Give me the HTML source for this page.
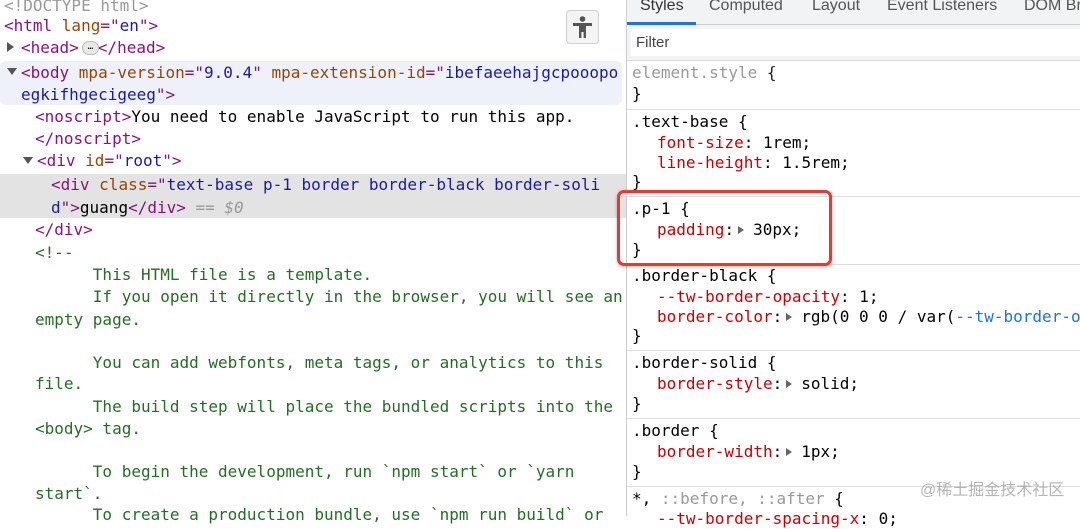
<!DOCTYPE html>
<html><head><style>
body{margin:0;width:1080px;height:516px;overflow:hidden;background:#fff;position:relative;font-family:"DejaVu Sans Mono","Liberation Mono",monospace;font-size:16px;}
.l{position:absolute;white-space:pre;line-height:20px;}
.t{color:#881280}.a{color:#994500}.v{color:#1a1aa6}.c{color:#236e25}.g{color:#999}.p{color:#c80000}.b{color:#1a73e8}
.s{font-family:"Liberation Sans",sans-serif;}
.sep{position:absolute;left:627px;right:0;height:1px;background:#ddd}
.in{margin-left:25px}
.ar{display:inline-block;width:0;height:0;border-left:6px solid #666;border-top:4px solid transparent;border-bottom:4px solid transparent;margin:0 9px 1px 4px;vertical-align:middle}
</style></head><body>
<div style="position:absolute;left:0;top:61px;width:622px;height:44px;background:#eef1fa;border-radius:6px"></div>
<div style="position:absolute;left:0;top:174px;width:626px;height:44px;background:#e3e3e3"></div>
<div style="position:absolute;left:626px;top:0;width:1px;height:516px;background:#ccc"></div>

<div class="l g" style="left:4px;top:-4px">&lt;!DOCTYPE html&gt;</div>
<div class="l" style="left:4px;top:16px"><span class="t">&lt;html </span><span class="a">lang</span><span class="t">="</span><span class="v">en</span><span class="t">"&gt;</span></div>
<div class="l" style="left:7px;top:38px"><span style="position:absolute;left:0;top:4px;width:0;height:0;border-left:7px solid #555;border-top:5px solid transparent;border-bottom:5px solid transparent"></span><span style="margin-left:14px" class="t">&lt;head&gt;</span><span style="display:inline-block;width:19px"></span><span class="t">&lt;/head&gt;</span><span style="position:absolute;left:75px;top:3px;width:15px;height:12px;background:#e8e8e8;border:1px solid #bbb;border-radius:7px;font-size:9px;line-height:10px;text-align:center">…</span></div>
<div class="l" style="left:7px;top:63px"><span style="position:absolute;left:0;top:5px;width:0;height:0;border-top:7px solid #555;border-left:5px solid transparent;border-right:5px solid transparent"></span><span style="margin-left:14px" class="t">&lt;body </span><span class="a">mpa-version</span><span class="t">="</span><span class="v">9.0.4</span><span class="t">" </span><span class="a">mpa-extension-id</span><span class="t">="</span><span class="v">ibefaeehajgcpooopo</span></div>
<div class="l" style="left:21px;top:85px"><span class="v">egkifhgecigeeg</span><span class="t">"&gt;</span></div>
<div class="l" style="left:35px;top:107px"><span class="t">&lt;noscript&gt;</span>You need to enable JavaScript to run this app.</div>
<div class="l t" style="left:35px;top:129px">&lt;/noscript&gt;</div>
<div class="l" style="left:23px;top:151px"><span style="position:absolute;left:0;top:6px;width:0;height:0;border-top:7px solid #555;border-left:5px solid transparent;border-right:5px solid transparent"></span><span style="margin-left:14px" class="t">&lt;div </span><span class="a">id</span><span class="t">="</span><span class="v">root</span><span class="t">"&gt;</span></div>
<div class="l" style="left:51px;top:175px"><span class="t">&lt;div </span><span class="a">class</span><span class="t">="</span><span class="v">text-base p-1 border border-black border-soli</span></div>
<div class="l" style="left:51px;top:198px"><span class="v">d</span><span class="t">"&gt;</span>guang<span class="t">&lt;/div&gt;</span><span class="g"> == <i>$0</i></span></div>
<div class="l t" style="left:35px;top:220px">&lt;/div&gt;</div>
<div class="l c" style="left:35px;top:243px">&lt;!--</div>
<div class="l c" style="left:35px;top:265px">      This HTML file is a template.</div>
<div class="l c" style="left:35px;top:287px">      If you open it directly in the browser, you will see an</div>
<div class="l c" style="left:35px;top:310px">empty page.</div>
<div class="l c" style="left:35px;top:353px">      You can add webfonts, meta tags, or analytics to this</div>
<div class="l c" style="left:35px;top:374px">file.</div>
<div class="l c" style="left:35px;top:397px">      The build step will place the bundled scripts into the</div>
<div class="l c" style="left:35px;top:419px">&lt;body&gt; tag.</div>
<div class="l c" style="left:35px;top:462px">      To begin the development, run `npm start` or `yarn</div>
<div class="l c" style="left:35px;top:484px">start`.</div>
<div class="l c" style="left:35px;top:505px">      To create a production bundle, use `npm run build` or</div>

<div style="position:absolute;left:566px;top:10px;width:31px;height:32px;background:#f4f4f4;border:1px solid #d0d0d0;border-radius:4px">
<svg width="31" height="32" viewBox="0 0 31 32"><circle cx="15.5" cy="8" r="2.8" fill="#555"/><path d="M6 12h19v3h-6v12h-2.4v-6h-2.2v6h-2.4v-12h-6z" fill="#555"/></svg></div>

<div style="position:absolute;left:627px;top:0;width:453px;height:60px;background:#f1f3f4"></div>
<div style="position:absolute;left:627px;top:24px;width:453px;height:1px;background:#ccc"></div>
<div style="position:absolute;left:627px;top:22px;width:69px;height:3px;background:#1a73e8"></div>
<div class="l s" style="left:640px;top:-4px;font-size:16px;color:#333">Styles</div>
<div class="l s" style="left:709px;top:-4px;font-size:16px;color:#555">Computed</div>
<div class="l s" style="left:812px;top:-4px;font-size:16px;color:#555">Layout</div>
<div class="l s" style="left:887px;top:-4px;font-size:16px;color:#555">Event Listeners</div>
<div class="l s" style="left:1024px;top:-4px;font-size:16px;color:#555">DOM Br</div>
<div style="position:absolute;left:631px;top:29px;width:449px;height:27px;background:#fff"></div>
<div class="l s" style="left:636px;top:33px;font-size:15px;color:#444">Filter</div>
<div class="sep" style="top:60px"></div>

<div class="l g" style="left:632px;top:63px">element.style <span style="color:#222">{</span></div>
<div class="l" style="left:632px;top:84px">}</div>
<div class="sep" style="top:109px"></div>
<div class="l" style="left:632px;top:112px">.text-base {</div>
<div class="l" style="left:632px;top:133px"><span class="in p">font-size</span>: 1rem;</div>
<div class="l" style="left:632px;top:153px"><span class="in p">line-height</span>: 1.5rem;</div>
<div class="l" style="left:632px;top:172px">}</div>
<div class="sep" style="top:196px"></div>
<div class="l" style="left:632px;top:199px">.p-1 {</div>
<div class="l" style="left:632px;top:220px"><span class="in p">padding</span>:<span class="ar"></span>30px;</div>
<div class="l" style="left:632px;top:240px">}</div>
<div class="sep" style="top:264px"></div>
<div class="l" style="left:632px;top:266px">.border-black {</div>
<div class="l" style="left:632px;top:287px"><span class="in p">--tw-border-opacity</span>: 1;</div>
<div class="l" style="left:632px;top:307px"><span class="in p">border-color</span>:<span class="ar"></span>rgb(0 0 0 / var(<span class="b">--tw-border-o</span></div>
<div class="l" style="left:632px;top:326px">}</div>
<div class="sep" style="top:350px"></div>
<div class="l" style="left:632px;top:353px">.border-solid {</div>
<div class="l" style="left:632px;top:374px"><span class="in p">border-style</span>:<span class="ar"></span>solid;</div>
<div class="l" style="left:632px;top:394px">}</div>
<div class="sep" style="top:418px"></div>
<div class="l" style="left:632px;top:421px">.border {</div>
<div class="l" style="left:632px;top:442px"><span class="in p">border-width</span>:<span class="ar"></span>1px;</div>
<div class="l" style="left:632px;top:462px">}</div>
<div class="sep" style="top:486px"></div>
<div class="l" style="left:632px;top:489px">*, <span class="g">::before, ::after</span> {</div>
<div class="l" style="left:632px;top:509px"><span class="in p">--tw-border-spacing-x</span>: 0;</div>
<div class="l" style="left:920px;top:481px;font-family:'Liberation Sans','Noto Sans CJK SC',sans-serif;font-size:16px;color:rgba(150,150,150,0.7)">@稀土掘金技术社区</div>

<div style="position:absolute;left:617px;top:190px;width:209px;height:70px;border:3px solid #e53a2e;border-radius:7px;box-shadow:0 1px 3px rgba(0,0,0,.3)"></div>
</body></html>
